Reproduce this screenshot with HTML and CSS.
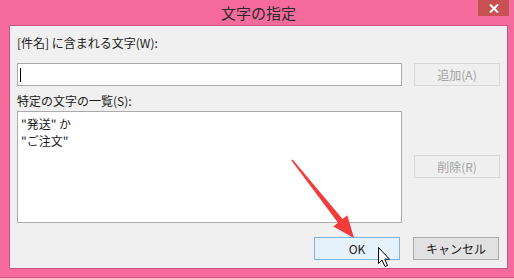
FILE: index.html
```html
<!doctype html>
<html>
  <head>
    <meta charset="utf-8" />
    <title>文字の指定</title>
    <link rel="stylesheet" href="styles.css">
  </head>
  <body>
    <div class="window">
      <div class="title-bar">
        <span class="title">文字の指定</span>
        <span class="close-btn">
          <svg width="10" height="9" viewBox="0 0 10 9">
            <path d="M1 0.5 L9 8.5 M9 0.5 L1 8.5" stroke="#fff" stroke-width="2" />
          </svg>
        </span>
      </div>

      <div class="client">
        <label class="field-label">[件名] に含まれる文字(W):</label>
        <div class="row">
          <div class="text-input"><span class="caret"></span></div>
          <button class="btn btn-disabled">追加(A)</button>
        </div>
        <label class="field-label list-label">特定の文字の一覧(S):</label>
        <div class="row">
          <div class="list-box">
            <div class="list-item">"発送" か</div>
            <div class="list-item">"ご注文"</div>
          </div>
          <button class="btn btn-disabled btn-delete">削除(R)</button>
        </div>
        <div class="footer">
          <button class="btn btn-default">OK</button>
          <button class="btn">キャンセル</button>
        </div>
      </div>

      <svg class="overlay" width="514" height="278" viewBox="0 0 514 278">
        <!-- red annotation arrow -->
        <polygon fill="#f23b3b"
          points="291.4,160.5 292.6,159.5 342.6,218.9 347.3,215.2 354,238 333.3,226.4 338,222.7" />
        <!-- mouse pointer -->
        <path d="M378.5 247.5 L378.5 263.5 L382 260 L385 266.5 L387.5 265.5 L384.8 259.2 L389.5 259.2 Z"
          fill="#fff" stroke="#000" stroke-width="1" stroke-linejoin="round" />
      </svg>
    </div>
  </body>
</html>
```

FILE: styles.css
```css
:root {
  --font-ui: "Noto Sans CJK JP", "Noto Sans", sans-serif;
  --color-frame: #f56c9c;
  --color-frame-edge: #c85583;
  --color-face: #f0f0f0;
  --color-text: #1a1a1a;
  --color-disabled: #a3a3a3;
}
* {
  margin: 0;
  padding: 0;
  box-sizing: border-box;
}
html,
body {
  width: 514px;
  height: 278px;
  overflow: hidden;
  font-family: var(--font-ui);
  font-size: 12px;
  color: var(--color-text);
}
.window {
  position: relative;
  width: 514px;
  height: 278px;
  display: flex;
  flex-direction: column;
  background: var(--color-frame);
  border-bottom: 1px solid var(--color-frame-edge);
}
.title-bar {
  position: relative;
  height: 25px;
  display: flex;
  align-items: center;
  justify-content: center;
}
.title {
  font-size: 15px;
  line-height: 25px;
  color: #2a2a2a;
  padding-left: 3px;
}
.close-btn {
  position: absolute;
  top: 0;
  right: 5px;
  width: 31px;
  height: 16px;
  background: #c75050;
  display: flex;
  align-items: center;
  justify-content: center;
}
.client {
  margin: 0 6px 0 9px;
  height: 244px;
  background: var(--color-face);
  border: 1px solid var(--color-frame-edge);
  padding: 8px 7px 8px 7px;
  display: flex;
  flex-direction: column;
}
.field-label {
  display: block;
  line-height: 17px;
  height: 17px;
  margin-bottom: 12px;
}
.list-label {
  margin-top: 6px;
  margin-bottom: 2px;
}
.row {
  display: flex;
  gap: 12px;
  align-items: flex-start;
}
.text-input {
  width: 385px;
  height: 23px;
  background: #fff;
  border: 1px solid #ababab;
  display: flex;
  align-items: center;
  padding-left: 2px;
}
.caret {
  width: 1px;
  height: 14px;
  background: #000;
}
.list-box {
  width: 385px;
  height: 112px;
  background: #fff;
  border: 1px solid #ababab;
  padding: 3px 0 0 3px;
}
.list-item {
  line-height: 17px;
}
.btn {
  width: 86px;
  height: 23px;
  font-family: var(--font-ui);
  font-size: 12px;
  color: var(--color-text);
  background: #e1e1e1;
  border: 1px solid #adadad;
  line-height: 20px;
}
.btn-disabled {
  color: var(--color-disabled);
  background: #efefef;
  border-color: #d9d9d9;
}
.btn-delete {
  margin-top: 44px;
}
.btn-default {
  background: #e5f1fb;
  border-color: #7eb4ea;
}
.footer {
  margin-top: 14px;
  display: flex;
  justify-content: flex-end;
  gap: 13px;
  padding-right: 1px;
}
.overlay {
  position: absolute;
  top: 0;
  left: 0;
  pointer-events: none;
}
```
